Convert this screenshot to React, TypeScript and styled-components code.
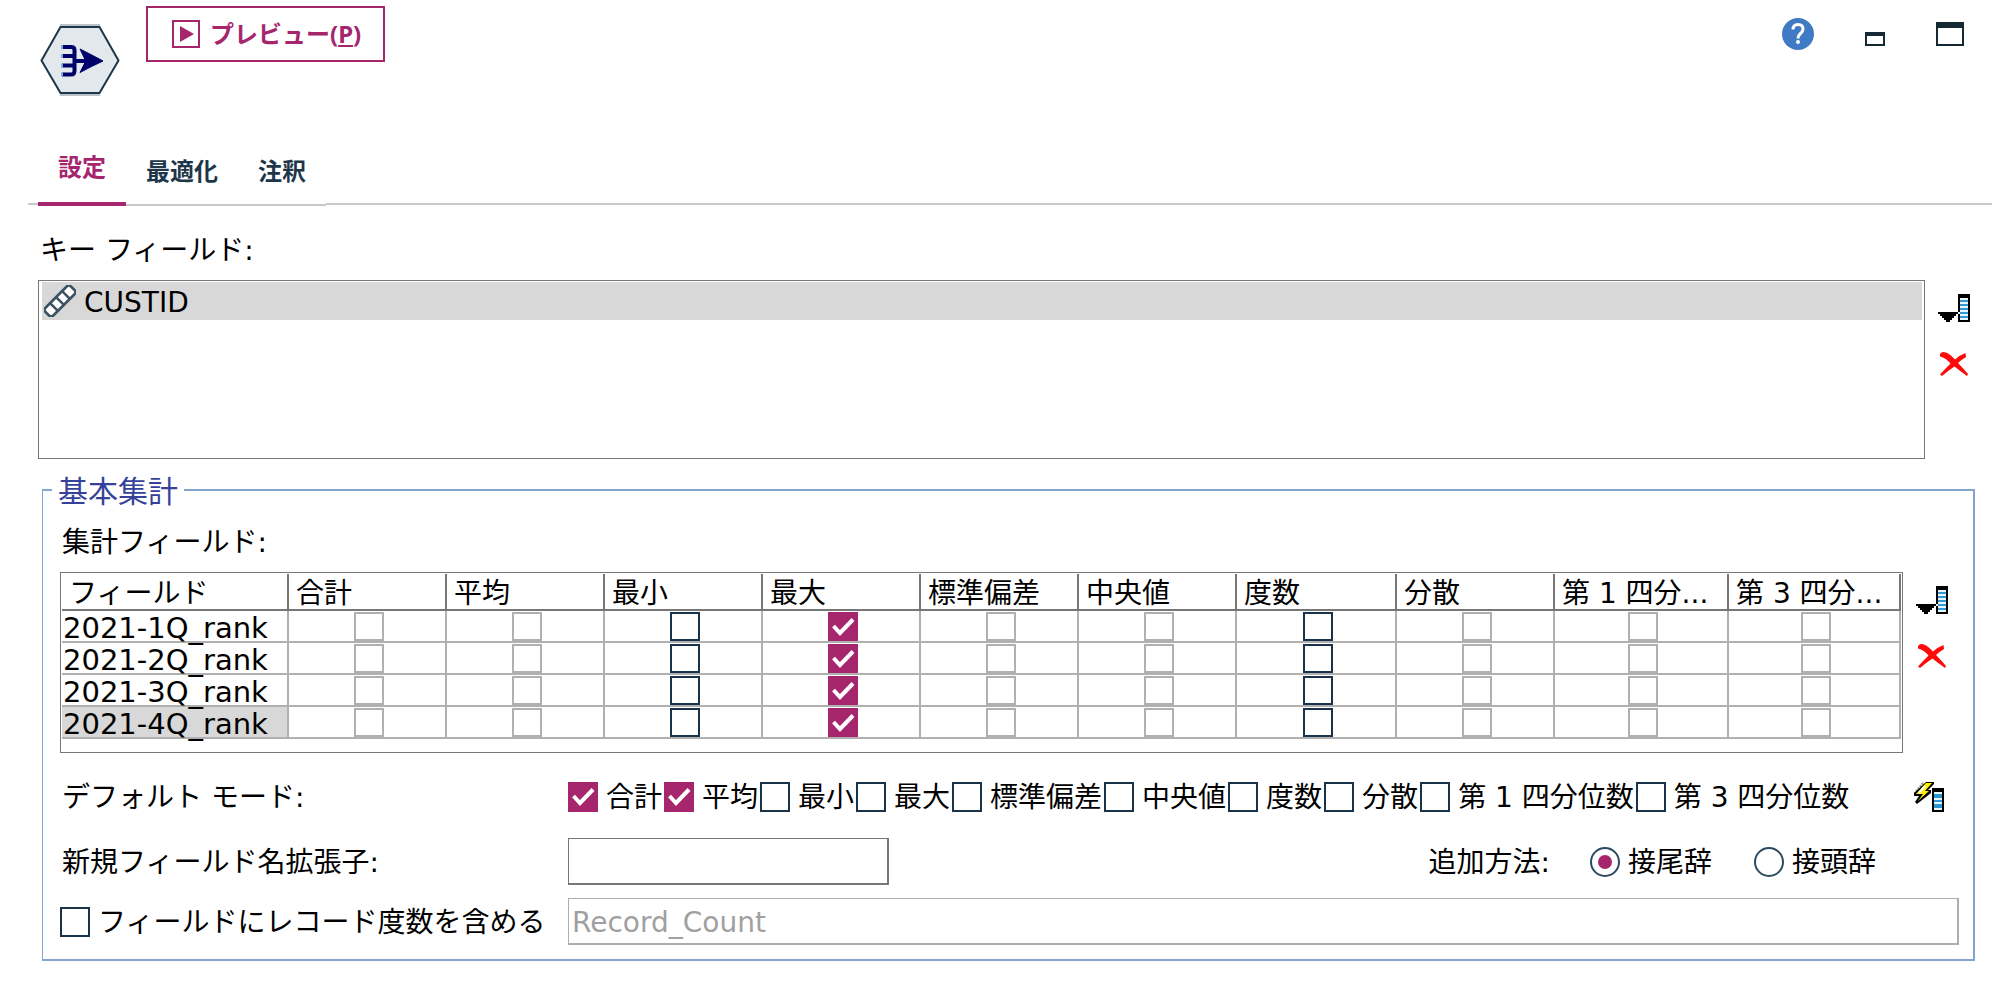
import React, { useState } from "react";
import styled, { createGlobalStyle } from "styled-components";

const magenta = "#a6266e";
const navy = "#1d3649";
const frame = "#777777";
const grid = "#b0b0b0";
const groupBlue = "#84a3cd";
const selection = "#d8d8d8";

const bodyFont = `"DejaVu Sans", "Noto Sans CJK JP", sans-serif`;
const boldFont = `"Noto Sans", "Noto Sans CJK JP", sans-serif`;

const GlobalStyle = createGlobalStyle`
  *, *::before, *::after { box-sizing: border-box; }
  body {
    margin: 0;
    background: #fff;
    color: #000;
    font-family: ${bodyFont};
    font-size: 28px;
    line-height: 36px;
  }
  button, input { font: inherit; color: inherit; margin: 0; }
`;

const Page = styled.main`
  display: flex;
  flex-direction: column;
  padding-bottom: 23px;
`;

const Header = styled.header`
  display: flex;
  align-items: flex-start;
  padding: 6px 42px 0 40px;
`;

const NodeBadge = styled.svg`
  display: block;
  width: 80px;
  height: 72px;
  margin: 18px 26px 0 0;
`;

const PreviewButton = styled.button`
  display: flex;
  align-items: center;
  justify-content: center;
  gap: 10px;
  height: 56px;
  padding: 0 22px 0 24px;
  border: 2px solid ${magenta};
  background: #fff;
  color: ${magenta};
  font: bold 24px/32px ${boldFont};
  white-space: nowrap;

  svg { display: block; }
  u { text-decoration-thickness: 2px; text-underline-offset: 2px; }
`;

const WindowTools = styled.div`
  display: flex;
  align-items: center;
  gap: 51px;
  margin: 12px 0 0 auto;
`;

const IconButton = styled.button`
  display: block;
  padding: 0;
  border: 0;
  background: none;

  svg { display: block; }
`;

const TabBar = styled.nav`
  display: flex;
  height: 70px;
  margin: 40px 14px 0 28px;
`;

const TabRule = styled.span<{ $grow?: boolean }>`
  flex: ${(p) => (p.$grow ? "1" : "0 0 10px")};
  height: 69px;
  border-bottom: 2px solid #c8c8c8;
`;

const Tab = styled.button<{ $active: boolean }>`
  padding: ${(p) => (p.$active ? "0 20px 4px" : "2px 20px 0")};
  border: 0;
  border-bottom: ${(p) => (p.$active ? `4px solid ${magenta}` : "2px solid #c8c8c8")};
  background: none;
  color: ${(p) => (p.$active ? magenta : navy)};
  font: bold 24px/32px ${boldFont};
  white-space: nowrap;
`;

const KeySection = styled.section`
  padding: 27px 0 0 38px;
`;

const SectionLabel = styled.div`
  margin-bottom: 11px;
  padding-left: 2px;
`;

const WithSide = styled.div`
  display: flex;
  align-items: stretch;
`;

const KeyList = styled.ul`
  flex: 1;
  height: 179px;
  margin: 0;
  padding: 1px 2px 1px 3px;
  border: 1px solid ${frame};
  list-style: none;
`;

const KeyItem = styled.li`
  display: flex;
  align-items: center;
  gap: 8px;
  height: 38px;
  padding-left: 2px;
  background: ${selection};

  svg { display: block; }
`;

const TextLine = styled.span`
  padding-top: 3px;
`;

const SideTools = styled.div<{ $wide?: boolean }>`
  display: flex;
  flex-direction: column;
  gap: 29px;
  width: ${(p) => (p.$wide ? "81px" : "56px")};
  padding: 14px 0 0 13px;
`;

const Group = styled.fieldset`
  min-width: 0;
  margin: 14px 31px 0 42px;
  padding: 0 14px 14px 17px;
  border: 2px solid ${groupBlue};
  border-left-width: 1px;
`;

const GroupTitle = styled.legend`
  margin-left: -8px;
  padding: 4px 6px 0;
  color: #36429a;
  font-size: 30px;
  line-height: 30px;
`;

const GroupLabel = styled(SectionLabel)`
  padding-top: 18px;
`;

const TableFrame = styled.div`
  flex: 1;
  min-width: 0;
  height: 181px;
  padding: 1px;
  border: 1px solid ${frame};
`;

const Grid = styled.table`
  width: 100%;
  table-layout: fixed;
  border-collapse: separate;
  border-spacing: 0;
`;

const HeadCell = styled.th`
  height: 37px;
  padding: 5px 2px 0 7px;
  border: solid ${frame};
  border-width: 0 2px 2px 0;
  font-weight: normal;
  line-height: 30px;
  text-align: left;
  white-space: nowrap;
`;

const NameCell = styled.th<{ $selected: boolean }>`
  height: 32px;
  padding: 0 0 0 1px;
  border: solid ${grid};
  border-width: 0 2px 2px 0;
  background: ${(p) => (p.$selected ? selection : "#fff")};
  font-size: 29px;
  font-weight: normal;
  text-align: left;
  vertical-align: top;
`;

const NameText = styled.div`
  height: 30px;
  line-height: 34px;
  white-space: nowrap;
`;

const TickCell = styled.td`
  padding: 1px 0 0 4px;
  border: solid ${grid};
  border-width: 0 2px 2px 0;
`;

const TickBox = styled.span<{ $short?: boolean }>`
  position: relative;
  display: block;
  flex: none;
  width: 30px;
  height: ${(p) => (p.$short ? "29px" : "30px")};
  margin: ${(p) => (p.$short ? "0 auto" : "0")};

  input {
    appearance: none;
    display: block;
    width: 100%;
    height: 100%;
    border: 2px solid #19334a;
    background: #fff;
  }
  input:disabled { border-color: ${grid}; }
  input:checked { border-color: ${magenta}; background: ${magenta}; }
  svg {
    position: absolute;
    inset: 0;
    pointer-events: none;
  }
`;

const FormRow = styled.div<{ $gap: number }>`
  display: flex;
  align-items: center;
  margin-top: ${(p) => p.$gap}px;
`;

const RowCaption = styled.div`
  flex: none;
  display: flex;
  width: 508px;
  padding: 3px 0 0 2px;
  white-space: nowrap;
`;

const TickRowCaption = styled(RowCaption)`
  padding: 0;
`;

const Choice = styled.label`
  display: flex;
  align-items: center;
  gap: 8px;
  height: 36px;
  padding-right: 2px;
  white-space: nowrap;
`;

const Choices = styled.div`
  display: flex;
`;

const ModeTool = styled.div`
  width: 45px;
  margin-left: auto;
`;

const TextBox = styled.input<{ $grow?: boolean }>`
  ${(p) => (p.$grow ? "flex: 1; min-width: 0;" : "width: 321px;")}
  height: 47px;
  padding: 2px 3px 0;
  border: solid ${frame};
  border-width: 1px 2px 2px 1px;
  border-radius: 0;
  background: #fff;

  &:disabled { border-color: #adadad; color: #a0a0a0; }
`;

const AffixGroup = styled.div`
  display: flex;
  align-items: center;
  gap: 40px;
  margin: 0 81px 0 auto;
`;

const Radio = styled.input`
  appearance: none;
  display: grid;
  place-items: center;
  width: 30px;
  height: 30px;
  border: 2px solid #2c4a60;
  border-radius: 50%;

  &:checked::before {
    content: "";
    width: 14px;
    height: 14px;
    border-radius: 50%;
    background: ${magenta};
  }
`;

function Tick(props: { short?: boolean } & React.InputHTMLAttributes<HTMLInputElement>) {
  const { short, ...input } = props;
  return (
    <TickBox $short={short}>
      <input type="checkbox" {...input} />
      {input.checked && (
        <svg width="30" height="30" viewBox="0 0 30 30" aria-hidden="true">
          <path d="M5.500 14L12 21L25 7.500" fill="none" stroke="#fff" strokeWidth="4" />
        </svg>
      )}
    </TickBox>
  );
}

function ColumnPickerIcon() {
  return (
    <svg width="32" height="28" viewBox="0 0 32 28" shapeRendering="crispEdges" aria-hidden="true">
      <path d="M20 0h12v28H20z" />
      <path d="M22 4h8v22h-8z" fill="#e8f6ff" />
      <path d="M22 6h8v2h-8zM22 10h8v2h-8zM22 14h8v2h-8zM22 18h8v2h-8zM22 22h8v2h-8z" fill="#3399cc" />
      <path d="M0 18h20v2h-2v2h-2v2h-2v2h-2v2H8v-2H6v-2H4v-2H2v-2H0z" />
      <path d="M20 18h2v2h-2z" fill="#fff" />
    </svg>
  );
}

function DeleteIcon() {
  return (
    <svg width="32" height="26" viewBox="-2 0 32 26" aria-hidden="true">
      <path
        d="M0 3Q2 0 6 1.500Q10 3 15 8.500Q20 4 25.500 2L26 6Q21 9 18 12Q23 17 28 23L27 25Q20 20 14.500 15.500Q9 19 2 25L0 23.500Q6 17 10.500 12.500Q6 7 0 5.500Z"
        fill="#ff0a0a"
      />
    </svg>
  );
}

function ModeIcon() {
  return (
    <svg width="30" height="30" viewBox="0 0 30 30" aria-hidden="true">
      <g shapeRendering="crispEdges">
        <path d="M18 6h12v24H18z" />
        <path d="M20 10h8v18h-8z" fill="#e8f6ff" />
        <path d="M20 12h8v4h-8zM20 18h8v2h-8zM20 22h8v4h-8z" fill="#2a96d0" />
      </g>
      <path d="M9 1L0 12" stroke="#8c8c8c" strokeWidth="2" strokeDasharray="2 1" />
      <path d="M12 0H20V2L14 8H17V11L3 22L1 20L5 14H0V11Z" fill="#000" />
      <path d="M12 1H18L11 9H15L4 19L9 12H2Z" fill="#ffee00" />
      <path d="M11 4L5 11" stroke="#fff" strokeWidth="2" />
    </svg>
  );
}

function NominalIcon() {
  return (
    <svg width="32" height="32" viewBox="0 0 32 32" aria-hidden="true">
      <g transform="rotate(-45 16 16)" fill="#fff" stroke="#3c5361" strokeWidth="2.600">
        <rect x="-2" y="10.500" width="36" height="11" rx="3" />
        <path d="M7.500 10.500v11M16 10.500v11M24.500 10.500v11" />
      </g>
    </svg>
  );
}

const columns = [
  { name: "合計", header: "合計", width: 158 },
  { name: "平均", header: "平均", width: 158 },
  { name: "最小", header: "最小", width: 158 },
  { name: "最大", header: "最大", width: 158 },
  { name: "標準偏差", header: "標準偏差", width: 158 },
  { name: "中央値", header: "中央値", width: 158 },
  { name: "度数", header: "度数", width: 160 },
  { name: "分散", header: "分散", width: 158 },
  { name: "第 1 四分位数", header: "第 1 四分...", width: 174 },
  { name: "第 3 四分位数", header: "第 3 四分...", width: 172 },
];

const enabledColumns = ["最小", "最大", "度数"];
const fields = ["2021-1Q_rank", "2021-2Q_rank", "2021-3Q_rank", "2021-4Q_rank"];
const tabs = ["設定", "最適化", "注釈"];

function toggle(list: string[], item: string) {
  return list.includes(item) ? list.filter((x) => x !== item) : [...list, item];
}

export default function App() {
  const [tab, setTab] = useState("設定");
  const [cells, setCells] = useState(fields.map((f) => `${f}/最大`));
  const [modes, setModes] = useState(["合計", "平均"]);
  const [extension, setExtension] = useState("");
  const [affix, setAffix] = useState("接尾辞");
  const [withCount, setWithCount] = useState(false);
  const [countName, setCountName] = useState("Record_Count");

  return (
    <>
      <GlobalStyle />
      <Page>
        <Header>
          <NodeBadge viewBox="0 0 80 72" aria-hidden="true">
            <path d="M20 1H60M20 71H60" stroke="#bcc2c6" strokeWidth="2" />
            <path d="M20.500 3H59.500L78.500 36.500L59.500 69H20.500L1.500 36.500Z" fill="#e3e8ec" stroke={navy} strokeWidth="2" />
            <g fill="none" stroke="#00006b" strokeWidth="4">
              <path d="M22 23H31Q34.500 23 34.500 26V33M22 32H34M34.500 40V47Q34.500 50.500 31 50.500H22M22 41.500H34M34.500 31V42M34 37H54" />
            </g>
            <path d="M40 25Q52 31 63 37Q52 42 40 48.500L45 38.500H50V35.500H45Z" fill="#00006b" stroke="#00006b" />
            <path d="M22 21v4M22 30v4M22 39.500v4M22 48.500v4" stroke="#7fa9d6" strokeWidth="2" />
          </NodeBadge>
          <PreviewButton type="button">
            <svg width="28" height="28" viewBox="0 0 28 28" aria-hidden="true">
              <rect x="1" y="1" width="26" height="26" fill="none" stroke={magenta} strokeWidth="2" />
              <path d="M8 6L22 14L8 22Z" fill={magenta} />
            </svg>
            <span>
              プレビュー(<u>P</u>)
            </span>
          </PreviewButton>
          <WindowTools>
            <IconButton type="button" aria-label="ヘルプ">
              <svg width="32" height="32" viewBox="0 0 32 32" aria-hidden="true">
                <circle cx="16" cy="16" r="16" fill="#3f7ac5" />
                <path d="M11 11.500Q11 6.500 16 6.500Q21 6.500 21 11Q21 13.500 18.500 15.500Q16 17.500 16 20.500" fill="none" stroke="#fff" strokeWidth="3" />
                <circle cx="16" cy="24" r="2" fill="#fff" />
              </svg>
            </IconButton>
            <IconButton type="button" aria-label="最小化">
              <svg width="20" height="24" viewBox="0 0 20 24" shapeRendering="crispEdges" aria-hidden="true">
                <path d="M0 10h20v14H0zM2 14v8h16v-8z" fill="#152934" fillRule="evenodd" />
              </svg>
            </IconButton>
            <IconButton type="button" aria-label="最大化">
              <svg width="28" height="24" viewBox="0 0 28 24" shapeRendering="crispEdges" aria-hidden="true">
                <path d="M0 0h28v24H0zM2 6v16h24V6z" fill="#152934" fillRule="evenodd" />
              </svg>
            </IconButton>
          </WindowTools>
        </Header>

        <TabBar>
          <TabRule />
          {tabs.map((t) => (
            <Tab key={t} type="button" $active={t === tab} onClick={() => setTab(t)}>
              {t}
            </Tab>
          ))}
          <TabRule $grow />
        </TabBar>

        <KeySection>
          <SectionLabel id="key-label">キー フィールド:</SectionLabel>
          <WithSide>
            <KeyList aria-labelledby="key-label">
              <KeyItem>
                <NominalIcon />
                <TextLine>CUSTID</TextLine>
              </KeyItem>
            </KeyList>
            <SideTools $wide>
              <IconButton type="button" aria-label="フィールドの選択">
                <ColumnPickerIcon />
              </IconButton>
              <IconButton type="button" aria-label="削除">
                <DeleteIcon />
              </IconButton>
            </SideTools>
          </WithSide>
        </KeySection>

        <Group>
          <GroupTitle>基本集計</GroupTitle>
          <GroupLabel id="agg-label">集計フィールド:</GroupLabel>
          <WithSide>
            <TableFrame>
              <Grid aria-labelledby="agg-label">
                <colgroup>
                  <col width={227} />
                  {columns.map((c) => (
                    <col key={c.name} width={c.width} />
                  ))}
                </colgroup>
                <thead>
                  <tr>
                    <HeadCell scope="col">フィールド</HeadCell>
                    {columns.map((c) => (
                      <HeadCell key={c.name} scope="col">
                        {c.header}
                      </HeadCell>
                    ))}
                  </tr>
                </thead>
                <tbody>
                  {fields.map((f, i) => (
                    <tr key={f}>
                      <NameCell scope="row" $selected={i === fields.length - 1}>
                        <NameText>{f}</NameText>
                      </NameCell>
                      {columns.map((c) => {
                        const id = `${f}/${c.name}`;
                        return (
                          <TickCell key={c.name}>
                            <Tick
                              short
                              aria-label={`${f} ${c.name}`}
                              disabled={!enabledColumns.includes(c.name)}
                              checked={cells.includes(id)}
                              onChange={() => setCells(toggle(cells, id))}
                            />
                          </TickCell>
                        );
                      })}
                    </tr>
                  ))}
                </tbody>
              </Grid>
            </TableFrame>
            <SideTools>
              <IconButton type="button" aria-label="集計フィールドの選択">
                <ColumnPickerIcon />
              </IconButton>
              <IconButton type="button" aria-label="集計フィールドの削除">
                <DeleteIcon />
              </IconButton>
            </SideTools>
          </WithSide>

          <FormRow $gap={24}>
            <RowCaption id="mode-label">デフォルト モード:</RowCaption>
            <Choices role="group" aria-labelledby="mode-label">
              {columns.map((c) => (
                <Choice key={c.name}>
                  <Tick checked={modes.includes(c.name)} onChange={() => setModes(toggle(modes, c.name))} />
                  <TextLine>{c.name}</TextLine>
                </Choice>
              ))}
            </Choices>
            <ModeTool>
              <IconButton type="button" aria-label="デフォルトの適用">
                <ModeIcon />
              </IconButton>
            </ModeTool>
          </FormRow>

          <FormRow $gap={22}>
            <RowCaption>
              <label htmlFor="extension">新規フィールド名拡張子:</label>
            </RowCaption>
            <TextBox id="extension" type="text" value={extension} onChange={(e) => setExtension(e.target.value)} />
            <AffixGroup role="radiogroup" aria-labelledby="affix-label">
              <TextLine id="affix-label">追加方法:</TextLine>
              {["接尾辞", "接頭辞"].map((a) => (
                <Choice key={a}>
                  <Radio type="radio" name="affix" checked={affix === a} onChange={() => setAffix(a)} />
                  <TextLine>{a}</TextLine>
                </Choice>
              ))}
            </AffixGroup>
          </FormRow>

          <FormRow $gap={13}>
            <TickRowCaption>
              <Choice>
                <Tick checked={withCount} onChange={() => setWithCount(!withCount)} />
                <TextLine>フィールドにレコード度数を含める</TextLine>
              </Choice>
            </TickRowCaption>
            <TextBox
              $grow
              type="text"
              aria-label="レコード度数フィールド名"
              disabled={!withCount}
              value={countName}
              onChange={(e) => setCountName(e.target.value)}
            />
          </FormRow>
        </Group>
      </Page>
    </>
  );
}
